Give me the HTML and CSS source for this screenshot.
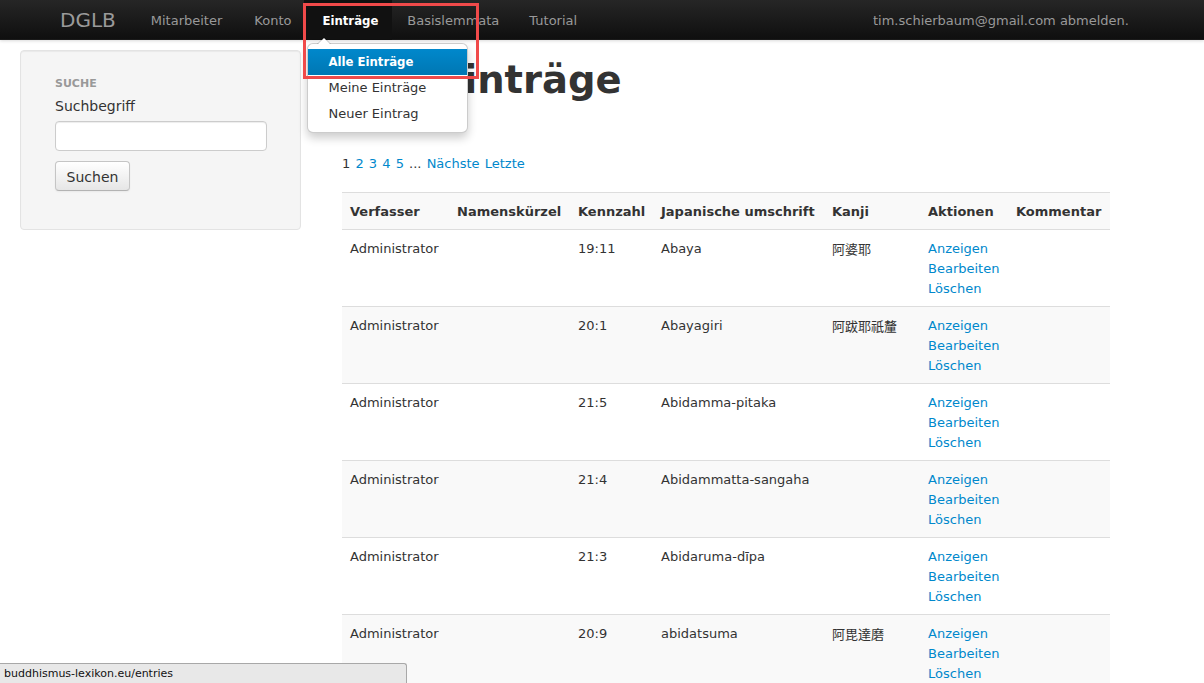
FILE: index.html
```html
<!DOCTYPE html>
<html lang="de">
<head>
<meta charset="utf-8">
<title>DGLB – Alle Einträge</title>
<link rel="stylesheet" href="styles.css">
</head>
<body>
<header class="navbar">
  <a class="brand" href="#">DGLB</a>
  <nav class="nav">
    <a href="#">Mitarbeiter</a>
    <a href="#" class="konto">Konto</a>
    <div class="nav-dropdown">
      <a href="#" class="active">Einträge</a>
      <div class="dropdown-menu">
        <a href="#" class="dd-active">Alle Einträge</a>
        <a href="#">Meine Einträge</a>
        <a href="#">Neuer Eintrag</a>
      </div>
      <div class="highlight"></div>
    </div>
    <a href="#">Basislemmata</a>
    <a href="#">Tutorial</a>
  </nav>
  <div class="navbar-text">tim.schierbaum@gmail.com abmelden.</div>
</header>

<div class="layout">
  <aside class="well">
    <div class="nav-header">SUCHE</div>
    <form class="search">
      <label class="label">Suchbegriff</label>
      <input class="input" type="text">
      <button class="btn" type="button">Suchen</button>
    </form>
  </aside>

  <main class="content">
    <h1 class="title">Alle Einträge</h1>
    <div class="pagination">1 <a href="#">2</a> <a href="#">3</a> <a href="#">4</a> <a href="#">5</a> ... <a href="#">Nächste</a> <a href="#">Letzte</a></div>

    <table class="table">
      <colgroup>
        <col class="c1"><col class="c2"><col class="c3"><col class="c4"><col class="c5"><col class="c6"><col class="c7">
      </colgroup>
      <thead>
        <tr><th>Verfasser</th><th>Namenskürzel</th><th>Kennzahl</th><th>Japanische umschrift</th><th>Kanji</th><th>Aktionen</th><th>Kommentar</th></tr>
      </thead>
      <tbody>
        <tr><td>Administrator</td><td></td><td>19:11</td><td>Abaya</td><td class="kanji">阿婆耶</td><td class="actions"><a href="#">Anzeigen</a><a href="#">Bearbeiten</a><a href="#">Löschen</a></td><td></td></tr>
        <tr><td>Administrator</td><td></td><td>20:1</td><td>Abayagiri</td><td class="kanji">阿跋耶祇釐</td><td class="actions"><a href="#">Anzeigen</a><a href="#">Bearbeiten</a><a href="#">Löschen</a></td><td></td></tr>
        <tr><td>Administrator</td><td></td><td>21:5</td><td>Abidamma-pitaka</td><td class="kanji"></td><td class="actions"><a href="#">Anzeigen</a><a href="#">Bearbeiten</a><a href="#">Löschen</a></td><td></td></tr>
        <tr><td>Administrator</td><td></td><td>21:4</td><td>Abidammatta-sangaha</td><td class="kanji"></td><td class="actions"><a href="#">Anzeigen</a><a href="#">Bearbeiten</a><a href="#">Löschen</a></td><td></td></tr>
        <tr><td>Administrator</td><td></td><td>21:3</td><td>Abidaruma-dīpa</td><td class="kanji"></td><td class="actions"><a href="#">Anzeigen</a><a href="#">Bearbeiten</a><a href="#">Löschen</a></td><td></td></tr>
        <tr><td>Administrator</td><td></td><td>20:9</td><td>abidatsuma</td><td class="kanji">阿毘達磨</td><td class="actions"><a href="#">Anzeigen</a><a href="#">Bearbeiten</a><a href="#">Löschen</a></td><td></td></tr>
      </tbody>
    </table>
  </main>
</div>

<div class="statusbar">buddhismus-lexikon.eu/entries</div>
</body>
</html>
```

FILE: styles.css
```css
html { overflow: hidden; }
body {
  margin: 0;
  background: #fff;
  color: #333;
  font-family: "DejaVu Sans", Verdana, "Noto Sans CJK JP", sans-serif;
  font-size: 13px;
  line-height: 20px;
}
a { color: #0088cc; text-decoration: none; }

/* navbar */
.navbar {
  height: 40px;
  box-sizing: border-box;
  display: flex;
  align-items: stretch;
  padding-left: 40px;
  background: linear-gradient(#262626, #0f0f0f);
  border-bottom: 1px solid #1a1a1a;
  box-shadow: 0 1px 3px rgba(0,0,0,0.15);
  position: relative;
  z-index: 10;
}
.brand {
  padding: 1px 20px 0;
  font-size: 20px;
  line-height: 39px;
  color: #9a9a9a;
  font-weight: normal;
}
.nav { display: flex; }
.nav a {
  display: block;
  padding: 2px 15px 0;
  line-height: 38px;
  color: #999;
}
.nav .konto { padding: 2px 13px 0 17px; }
.nav .active {
  color: #fff;
  background: #111;
  font-family: "DejaVu Sans Condensed", "DejaVu Sans", sans-serif;
  font-weight: bold;
  padding: 2px 14px 0 18px;
}
.nav-dropdown { position: relative; }
.dropdown-menu {
  position: absolute;
  left: 3px;
  top: 43px;
  width: 159px;
  padding: 5px 0;
  background: #fff;
  border: 1px solid rgba(0,0,0,0.2);
  border-radius: 6px;
  box-shadow: 0 5px 10px rgba(0,0,0,0.2);
}
.dropdown-menu::before {
  content: "";
  position: absolute;
  left: 9px;
  top: -7px;
  border-left: 7px solid transparent;
  border-right: 7px solid transparent;
  border-bottom: 7px solid rgba(0,0,0,0.2);
}
.dropdown-menu::after {
  content: "";
  position: absolute;
  left: 10px;
  top: -6px;
  border-left: 6px solid transparent;
  border-right: 6px solid transparent;
  border-bottom: 6px solid #fff;
}
.nav .dropdown-menu a {
  padding: 3px 20px;
  line-height: 20px;
  color: #333;
}
.nav .dropdown-menu .dd-active {
  color: #fff;
  font-family: "DejaVu Sans Condensed", "DejaVu Sans", sans-serif;
  font-weight: bold;
  background: linear-gradient(#0088cc, #0077b3);
}
.highlight {
  position: absolute;
  left: -1px;
  top: 3px;
  width: 170px;
  height: 70px;
  border: 3px solid #f04a4a;
  pointer-events: none;
}
.navbar-text {
  margin-left: auto;
  padding: 2px 75px 0 0;
  line-height: 38px;
  color: #999;
}

/* layout */
.layout {
  display: flex;
  align-items: flex-start;
  gap: 41px;
  padding: 10px 20px 0;
}
.well {
  width: 281px;
  box-sizing: border-box;
  min-height: 180px;
  padding: 19px 34px;
  background: #f5f5f5;
  border: 1px solid #e3e3e3;
  border-radius: 4px;
  box-shadow: inset 0 1px 1px rgba(0,0,0,0.05);
}
.nav-header {
  padding: 4px 0 2px;
  font-size: 11px;
  font-weight: bold;
  line-height: 20px;
  color: #999;
}
.search { display: flex; flex-direction: column; align-items: flex-start; }
.label {
  font-size: 14px;
  line-height: 20px;
  margin: 0 0 5px;
  color: #333;
}
.input {
  width: 212px;
  height: 30px;
  box-sizing: border-box;
  border: 1px solid #ccc;
  border-radius: 4px;
  box-shadow: inset 0 1px 1px rgba(0,0,0,0.075);
  background: #fff;
  margin: 0 0 10px;
}
.btn {
  height: 30px;
  width: 75px;
  padding: 1px 0 0;
  font-family: "DejaVu Sans", Verdana, sans-serif;
  font-size: 14px;
  color: #333;
  background: linear-gradient(#ffffff, #e6e6e6);
  border: 1px solid #c5c5c5;
  border-bottom-color: #b3b3b3;
  border-radius: 4px;
  box-shadow: inset 0 1px 0 rgba(255,255,255,0.2), 0 1px 2px rgba(0,0,0,0.05);
}

/* content */
.content { flex: 1; }
.title {
  margin: 10px 0 0;
  font-size: 38.5px;
  line-height: 40px;
  font-weight: bold;
  color: #333;
}
.pagination {
  margin: 54px 0 0;
  line-height: 20px;
  word-spacing: 1px;
}
.table {
  margin-top: 18px;
  width: 768px;
  table-layout: fixed;
  border-collapse: collapse;
}
.c1 { width: 107px; }
.c2 { width: 121px; }
.c3 { width: 83px; }
.c4 { width: 171px; }
.c5 { width: 96px; }
.c6 { width: 88px; }
.c7 { width: 102px; }
.table th, .table td {
  padding: 9px 8px 7px;
  text-align: left;
  vertical-align: top;
  border-top: 1px solid #dddddd;
  line-height: 20px;
  white-space: nowrap;
}
.table th {
  font-weight: bold;
  background: #f9f9f9;
}
.table tbody tr:nth-child(even) td { background: #f9f9f9; }
.kanji { font-family: "Noto Sans CJK JP", sans-serif; }
.actions a { display: block; }

.statusbar {
  position: fixed;
  left: 0;
  bottom: 0;
  width: 407px;
  height: 20px;
  box-sizing: border-box;
  padding-left: 4px;
  background: #e8e8e8;
  border-top: 1px solid #a8a8a8;
  border-right: 1px solid #a8a8a8;
  border-top-right-radius: 3px;
  font-family: "DejaVu Sans", sans-serif;
  font-size: 11px;
  line-height: 19px;
  color: #111;
}
```
